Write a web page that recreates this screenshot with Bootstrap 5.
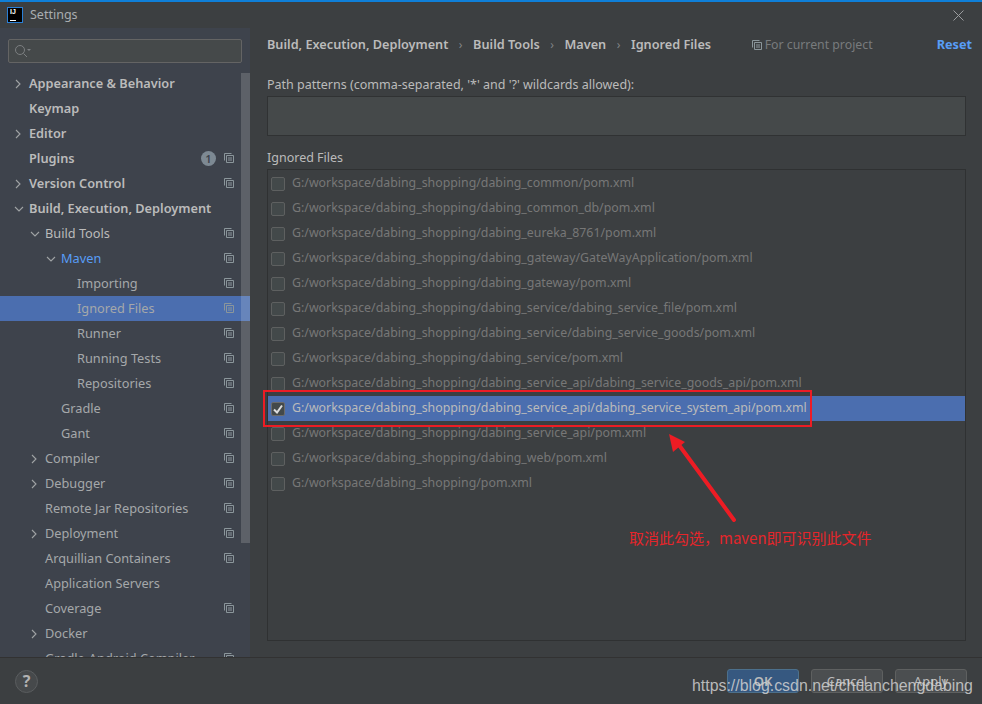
<!DOCTYPE html>
<html lang="en"><head><meta charset="utf-8"><title>Settings</title>
<link href="https://cdn.jsdelivr.net/npm/bootstrap@5.3.0/dist/css/bootstrap.min.css" rel="stylesheet">
<style>
html,body{height:100%;margin:0}
body{width:982px;height:704px;overflow:hidden;background:#3c3f41;font-family:"Noto Sans","Liberation Sans",sans-serif;font-size:12.75px;color:#bbb;position:relative}
.topline{height:2px;background:#0f7fd8}
.titlebar{height:26px;padding-left:7px;gap:7px;color:#a9adb0;font-size:12.5px}
.titlebar span{padding-top:1px}
.logo{width:16px;height:16px;background:#000;border:1px solid #2a7fd6;color:#fff;font:bold 7px/8px "Liberation Sans",sans-serif;padding-left:2px;position:relative}
.logo::after{content:"";position:absolute;left:2px;bottom:1px;width:6px;height:1px;background:#fff}
.close-x{margin-left:auto;margin-right:18px}
.body-row{height:629px}
.side{width:250px;background:#3e434c;flex:none;position:relative;overflow:hidden}
.search{margin:11px 8px 0;height:24px;background:#45494a;border:1px solid #646464;border-radius:2px;padding-left:5px}
.tree{margin-top:8px;height:586px;overflow:hidden}
.node{height:25px;position:relative;width:250px}
.node .lbl{position:absolute;top:3px;line-height:18px;white-space:nowrap}
.node svg.chev{position:absolute;top:8px}
.node svg.cp{position:absolute;left:224px;top:7px}
.b{font-weight:600;color:#bbb}
.l0{left:29px}.l1{left:45px}.l2{left:61px}.l3{left:77px}
.c0{left:14px}.c1{left:30px}.c2{left:46px}
.node.sel{background:#4b6eaf}
.muted{color:#a5a8aa}.blue{color:#589df6}
.badge1{position:absolute;left:201px;top:5px;width:15px;height:15px;border-radius:50%;background:#7d8993;color:#3e434c;font-size:11px;line-height:15px;text-align:center;font-weight:600}
.sb{position:absolute;left:241px;top:45px;width:9px;height:470px;background:rgba(255,255,255,.16)}
.main{flex:1;padding:0 16px 0 17px;min-width:0}
.crumbs{height:32px;padding-top:2px;gap:10.5px;color:#bbb;font-size:12.7px}
.crumbs .sep{color:#808386;font-size:12px}
.proj{color:#787b7d;gap:3px;margin-left:30px;font-size:12.3px;font-weight:400}
.reset{margin-left:auto;color:#589df6;font-weight:700;margin-right:-6px}
.pp{margin-top:16px;line-height:17px;font-size:12.5px}
.patterns{height:40px;margin-top:3px;background:#45494a;border:1px solid #303233}
.if{margin-top:13px;line-height:18px;font-size:12.5px}
.files{height:472px;margin-top:2px;border:1px solid #2f3132;padding:1px 0 0;background:#3c3f41}
.file{height:25px;padding-left:3px;color:#777;gap:7px;white-space:nowrap;font-size:12.35px}
.file.on{background:#4b6eaf;color:#bbb}
.box{width:14px;height:14px;border:1px solid #5e6060;border-radius:2px;background:#43494a;flex:none}
.on .box{background:#43494a;border-color:#6b6b6b}
.foot{height:47px;border-top:1px solid #323232;background:#3c3f41;padding:0 15px;position:relative}
.help{width:23px;height:23px;border-radius:50%;background:#46494b;border:1px solid #5a5d5f;color:#b3b3b3;font-weight:700;font-size:16px;line-height:20px;text-align:center}
.dbtn{width:72px;height:24px;border-radius:3px;background:#4b4e50;border:1px solid #5e6060;color:#bbb;font-size:13px;line-height:22px;padding:0;text-align:center}
.dbtn.ok{background:#365880;border-color:#4c708c;font-weight:600}
.btns{margin-left:auto;gap:12px}
.wm{position:absolute;left:692px;top:676px;font:15.9px/20px "Liberation Sans",sans-serif;color:rgba(215,215,215,.82);white-space:nowrap}
.redbox{position:absolute;left:263px;top:390px;width:549px;height:37px;border:2px solid #ed1c24}
.arrow{position:absolute;left:655px;top:420px}
.note{position:absolute;left:629px;top:528px;color:#e5252a;font:15px/20px "Noto Sans CJK SC",sans-serif;white-space:nowrap}
</style></head><body>
<div class="topline"></div>
<div class="titlebar d-flex align-items-center">
<div class="logo">IJ</div><span>Settings</span>
<svg class="close-x" width="11" height="11" viewBox="0 0 11 11"><path d="M.5.5l10 10M10.5.5l-10 10" stroke="#9a9c9e" fill="none"/></svg>
</div>
<div class="body-row d-flex">
<aside class="side">
<div class="search d-flex align-items-center"><svg width="18" height="14" viewBox="0 0 18 14"><circle cx="6" cy="6" r="4.5" fill="none" stroke="#7c7f81"/><path d="M9.5 9.5L13 13" stroke="#7c7f81"/><path d="M13 5h4l-2 2z" fill="#7c7f81"/></svg></div>
<div class="tree" id="tree"></div>
<div class="sb"></div>
</aside>
<main class="main">
<div class="crumbs d-flex align-items-center">
<span class="b">Build, Execution, Deployment</span><span class="sep">›</span><span class="b">Build Tools</span><span class="sep">›</span><span class="b">Maven</span><span class="sep">›</span><span class="b">Ignored Files</span>
<span class="proj d-flex align-items-center"><svg width="10" height="10" viewBox="0 0 10 10"><use href="#cpi"/></svg>For current project</span>
<span class="reset">Reset</span>
</div>
<div class="pp">Path patterns (comma-separated, '*' and '?' wildcards allowed):</div>
<div class="patterns"></div>
<div class="if">Ignored Files</div>
<div class="files" id="files"></div>
</main>
</div>
<footer class="foot d-flex align-items-center">
<div class="help">?</div>
<div class="btns d-flex"><button class="dbtn ok btn">OK</button><button class="dbtn btn">Cancel</button><button class="dbtn btn">Apply</button></div>
</footer>
<svg width="0" height="0" class="position-absolute"><symbol id="cpi" viewBox="0 0 10 10"><path d="M.5 7.5V.5h7M2.5 2.5h7v7h-7zM4 5h4M4 7h4" fill="none" stroke="#8b969b"/></symbol></svg>
<div class="redbox"></div>
<svg class="arrow" width="90" height="110" viewBox="0 0 90 110"><path d="M79 100L24 25" stroke="#ed1c24" stroke-width="4" stroke-linecap="round"/><path d="M14 14L30 22 18 32z" fill="#ed1c24"/></svg>
<div class="note">取消此勾选，maven即可识别此文件</div>
<div class="wm">https://blog.csdn.net/chuanchengdabing</div>
<script>
const chev={r:'M2 1l4 4-4 4',d:'M1 3l4 4 4-4'};
const T=[["Appearance & Behavior",0,'r',1,0],["Keymap",0,'',1,0],["Editor",0,'r',1,0],["Plugins",0,'',1,1,1],["Version Control",0,'r',1,1],["Build, Execution, Deployment",0,'d',1,0],["Build Tools",1,'d',0,1],["Maven",2,'d',0,1,0,'blue'],["Importing",3,'',0,1,0,'muted'],["Ignored Files",3,'',0,1,0,'muted sel'],["Runner",3,'',0,1,0,'muted'],["Running Tests",3,'',0,1,0,'muted'],["Repositories",3,'',0,1,0,'muted'],["Gradle",2,'',0,1,0,'muted'],["Gant",2,'',0,1,0,'muted'],["Compiler",1,'r',0,1,0,'muted'],["Debugger",1,'r',0,1,0,'muted'],["Remote Jar Repositories",1,'',0,1,0,'muted'],["Deployment",1,'r',0,1,0,'muted'],["Arquillian Containers",1,'',0,1,0,'muted'],["Application Servers",1,'',0,0,0,'muted'],["Coverage",1,'',0,1,0,'muted'],["Docker",1,'r',0,0,0,'muted'],["Gradle-Android Compiler",1,'',0,1,0,'muted']];
document.getElementById('tree').innerHTML=T.map(t=>{const[n,l,c,b,cp,bd,cl='']=t;const sel=cl.includes('sel');const e=n.replace('&','&amp;');return `<div class="node ${sel?'sel':''}">${c?`<svg class="chev c${l}" width="10" height="10" viewBox="0 0 10 10"><path d="${chev[c]}" fill="none" stroke="#a0a3a5" stroke-width="1.1"/></svg>`:''}<span class="lbl l${l} ${b?'b':''} ${cl.replace('sel','')}">${e}</span>${bd?'<span class="badge1">1</span>':''}${cp?'<svg class="cp" width="10" height="10"><use href="#cpi"/></svg>':''}</div>`}).join('');
const base='G:/workspace/dabing_shopping/';
const F=["dabing_common/pom.xml","dabing_common_db/pom.xml","dabing_eureka_8761/pom.xml","dabing_gateway/GateWayApplication/pom.xml","dabing_gateway/pom.xml","dabing_service/dabing_service_file/pom.xml","dabing_service/dabing_service_goods/pom.xml","dabing_service/pom.xml","dabing_service_api/dabing_service_goods_api/pom.xml","dabing_service_api/dabing_service_system_api/pom.xml","dabing_service_api/pom.xml","dabing_web/pom.xml","pom.xml"];
document.getElementById('files').innerHTML=F.map((f,i)=>`<div class="file d-flex align-items-center ${i==9?'on':''}"><span class="box d-flex align-items-center justify-content-center">${i==9?'<svg width="10" height="10" viewBox="0 0 10 10"><path d="M1 5.5l3 3 5-7" fill="none" stroke="#ddd" stroke-width="2"/></svg>':''}</span><span>${base+f}</span></div>`).join('');
</script>
<script src="https://cdn.jsdelivr.net/npm/bootstrap@5.3.0/dist/js/bootstrap.bundle.min.js"></script>
</body></html>
